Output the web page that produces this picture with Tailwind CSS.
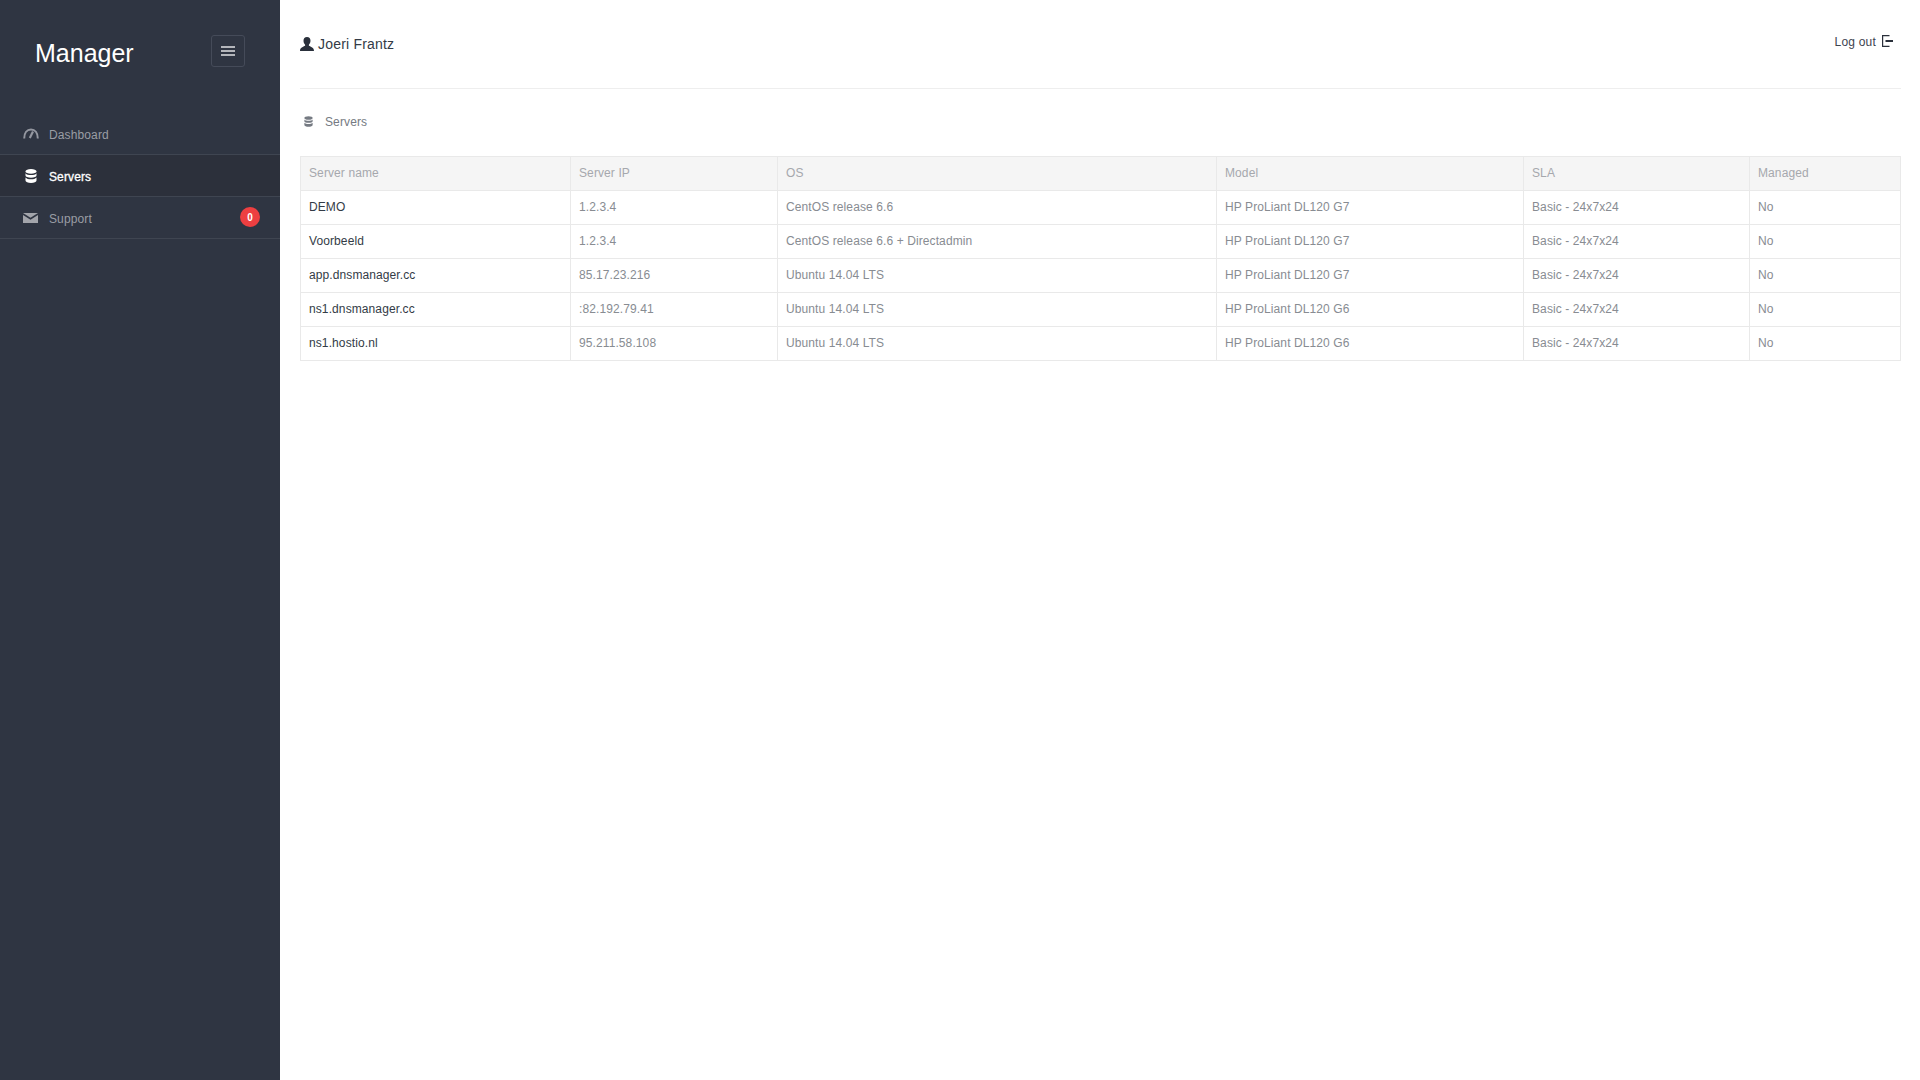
<!DOCTYPE html>
<html lang="en">
<head>
    <meta charset="UTF-8">
    <title>Manager</title>
    <script src="https://cdn.jsdelivr.net/npm/@tailwindcss/browser@4"></script>
</head>
<body class="bg-white font-['Liberation_Sans',Arial,sans-serif]">
<div class="flex h-[1080px] overflow-hidden">

    <!-- Sidebar -->
    <aside class="w-[280px] shrink-0 bg-[#2f3542]">
        <div class="flex items-start h-[113px] pt-[35px] pl-[35px] pr-[35px] justify-between">
            <span class="text-[25px] leading-[34px] mt-[1px] text-white">Manager</span>
            <button class="flex items-center justify-center w-[34px] h-[32px] rounded-[3px] border border-[#454b59] text-[#b4b6bb]">
                <svg width="14" height="12" viewBox="0 0 14 12" fill="currentColor"><rect y="1" width="14" height="2"/><rect y="5" width="14" height="2"/><rect y="9" width="14" height="2"/></svg>
            </button>
        </div>
        <nav class="text-[12px] tracking-[0.12px]">
            <a class="flex items-center h-[42px] border-b border-[#3f4551] text-[#9a9da4]">
                <span class="w-[49px] flex pl-[23px]">
                    <svg width="16" height="11" viewBox="0 0 16 11" fill="none" stroke="#9497a0" stroke-width="2"><path d="M1.200 10.500 C1.200 5 4 1.500 8 1.500 C12 1.500 14.800 5 14.800 10.500"/><path d="M6.800 10 L10 3.400" stroke-width="2.200"/></svg>
                </span>
                <span class="pt-[2px]">Dashboard</span>
            </a>
            <a class="flex items-center h-[42px] border-b border-[#3f4551] bg-[#2c303b] text-white">
                <span class="w-[49px] flex pl-[25px]">
                    <svg width="12" height="14" viewBox="0 0 12 14" fill="#fff"><ellipse cx="6" cy="2.400" rx="5.500" ry="2.400"/><path d="M.5 4.200C1.500 5.600 3.600 6.100 6 6.100s4.500-.5 5.500-1.900v2.300C11.500 7.800 9 8.700 6 8.700S.5 7.800.5 6.500z"/><path d="M.5 8.500C1.500 9.800 3.600 10.300 6 10.300s4.500-.5 5.500-1.800v3C11.500 12.900 9 14 6 14S.5 12.900.5 11.500z"/></svg>
                </span>
                <span class="pt-[2px] [-webkit-text-stroke:0.3px_white]">Servers</span>
            </a>
            <a class="relative flex items-center h-[42px] border-b border-[#3f4551] text-[#9a9da4]">
                <span class="w-[49px] flex pl-[23px]">
                    <svg width="15" height="10" viewBox="0 0 15 10" fill="#a3a5ab"><path d="M0 0H15L7.500 4.800z"/><path d="M0 2V10H15V2L7.500 6.800z"/></svg>
                </span>
                <span class="pt-[2px]">Support</span>
                <span class="absolute left-[240px] top-[10px] flex items-center justify-center w-[20px] h-[20px] rounded-full bg-[#ed3f41] text-white text-[10px] font-bold">0</span>
            </a>
        </nav>
    </aside>

    <!-- Main content -->
    <main class="flex-1 pl-[20px] pr-[20px]">
        <header class="flex justify-between h-[89px] border-b border-[#eeeeee]">
            <div class="flex items-center gap-[4px] h-[88px] text-[14px] tracking-[0.2px] text-[#333b46]">
                <svg width="14" height="14" viewBox="0 0 14 14" fill="#2a303b"><path d="M7 0C4.700 0 3.500 1.700 3.500 3.800c0 1.500.6 3 1.600 3.900v1C3.300 9.700 0 10.400 0 14h14c0-3.600-3.300-4.300-5.100-5.300v-1c1-.9 1.600-2.400 1.600-3.900C10.500 1.700 9.300 0 7 0z"/></svg>
                <span>Joeri Frantz</span>
            </div>
            <div class="flex items-start gap-[6px] pt-[35px] pr-[8px] text-[12px] leading-[14px] tracking-[0.2px] text-[#3d4450]">
                <span>Log out</span>
                <svg width="11" height="12" viewBox="0 0 11 12" fill="none" stroke="#2a303b"><path d="M7.500 .6H.6v10.800h6.900" stroke-width="1.200"/><path d="M3.500 6H11" stroke-width="2"/></svg>
            </div>
        </header>

        <div class="flex items-center h-[67px] pb-[2px] text-[12px] tracking-[0.12px] text-[#757a82]">
            <span class="w-[25px] flex pl-[4px]">
                <svg width="9" height="11" viewBox="0 0 12 14" fill="#757a82"><ellipse cx="6" cy="2.400" rx="5.500" ry="2.400"/><path d="M.5 4.200C1.500 5.600 3.600 6.100 6 6.100s4.500-.5 5.500-1.900v2.300C11.500 7.800 9 8.700 6 8.700S.5 7.800.5 6.500z"/><path d="M.5 8.500C1.500 9.800 3.600 10.300 6 10.300s4.500-.5 5.500-1.800v3C11.500 12.900 9 14 6 14S.5 12.900.5 11.500z"/></svg>
            </span>
            <span>Servers</span>
        </div>

        <table class="w-[1600px] table-fixed border-collapse text-[12px] tracking-[0.1px] text-[#888c92] [&_td]:pb-[2px] [&_th]:pb-[2px]">
            <colgroup>
                <col class="w-[270px]"><col class="w-[207px]"><col class="w-[439px]"><col class="w-[307px]"><col class="w-[226px]"><col class="w-[151px]">
            </colgroup>
            <thead class="bg-[#f5f5f5] text-[#a6a8ad]">
                <tr class="h-[34px]">
                    <th class="border border-[#e9e9e9] px-[8px] text-left font-normal">Server name</th>
                    <th class="border border-[#e9e9e9] px-[8px] text-left font-normal">Server IP</th>
                    <th class="border border-[#e9e9e9] px-[8px] text-left font-normal">OS</th>
                    <th class="border border-[#e9e9e9] px-[8px] text-left font-normal">Model</th>
                    <th class="border border-[#e9e9e9] px-[8px] text-left font-normal">SLA</th>
                    <th class="border border-[#e9e9e9] px-[8px] text-left font-normal">Managed</th>
                </tr>
            </thead>
            <tbody>
                <tr class="h-[34px]">
                    <td class="border border-[#e9e9e9] px-[8px] text-[#333b46]">DEMO</td>
                    <td class="border border-[#e9e9e9] px-[8px]">1.2.3.4</td>
                    <td class="border border-[#e9e9e9] px-[8px]">CentOS release 6.6</td>
                    <td class="border border-[#e9e9e9] px-[8px]">HP ProLiant DL120 G7</td>
                    <td class="border border-[#e9e9e9] px-[8px]">Basic - 24x7x24</td>
                    <td class="border border-[#e9e9e9] px-[8px]">No</td>
                </tr>
                <tr class="h-[34px]">
                    <td class="border border-[#e9e9e9] px-[8px] text-[#333b46]">Voorbeeld</td>
                    <td class="border border-[#e9e9e9] px-[8px]">1.2.3.4</td>
                    <td class="border border-[#e9e9e9] px-[8px]">CentOS release 6.6 + Directadmin</td>
                    <td class="border border-[#e9e9e9] px-[8px]">HP ProLiant DL120 G7</td>
                    <td class="border border-[#e9e9e9] px-[8px]">Basic - 24x7x24</td>
                    <td class="border border-[#e9e9e9] px-[8px]">No</td>
                </tr>
                <tr class="h-[34px]">
                    <td class="border border-[#e9e9e9] px-[8px] text-[#333b46]">app.dnsmanager.cc</td>
                    <td class="border border-[#e9e9e9] px-[8px]">85.17.23.216</td>
                    <td class="border border-[#e9e9e9] px-[8px]">Ubuntu 14.04 LTS</td>
                    <td class="border border-[#e9e9e9] px-[8px]">HP ProLiant DL120 G7</td>
                    <td class="border border-[#e9e9e9] px-[8px]">Basic - 24x7x24</td>
                    <td class="border border-[#e9e9e9] px-[8px]">No</td>
                </tr>
                <tr class="h-[34px]">
                    <td class="border border-[#e9e9e9] px-[8px] text-[#333b46]">ns1.dnsmanager.cc</td>
                    <td class="border border-[#e9e9e9] px-[8px]">:82.192.79.41</td>
                    <td class="border border-[#e9e9e9] px-[8px]">Ubuntu 14.04 LTS</td>
                    <td class="border border-[#e9e9e9] px-[8px]">HP ProLiant DL120 G6</td>
                    <td class="border border-[#e9e9e9] px-[8px]">Basic - 24x7x24</td>
                    <td class="border border-[#e9e9e9] px-[8px]">No</td>
                </tr>
                <tr class="h-[34px]">
                    <td class="border border-[#e9e9e9] px-[8px] text-[#333b46]">ns1.hostio.nl</td>
                    <td class="border border-[#e9e9e9] px-[8px]">95.211.58.108</td>
                    <td class="border border-[#e9e9e9] px-[8px]">Ubuntu 14.04 LTS</td>
                    <td class="border border-[#e9e9e9] px-[8px]">HP ProLiant DL120 G6</td>
                    <td class="border border-[#e9e9e9] px-[8px]">Basic - 24x7x24</td>
                    <td class="border border-[#e9e9e9] px-[8px]">No</td>
                </tr>
            </tbody>
        </table>
    </main>
</div>
</body>
</html>
